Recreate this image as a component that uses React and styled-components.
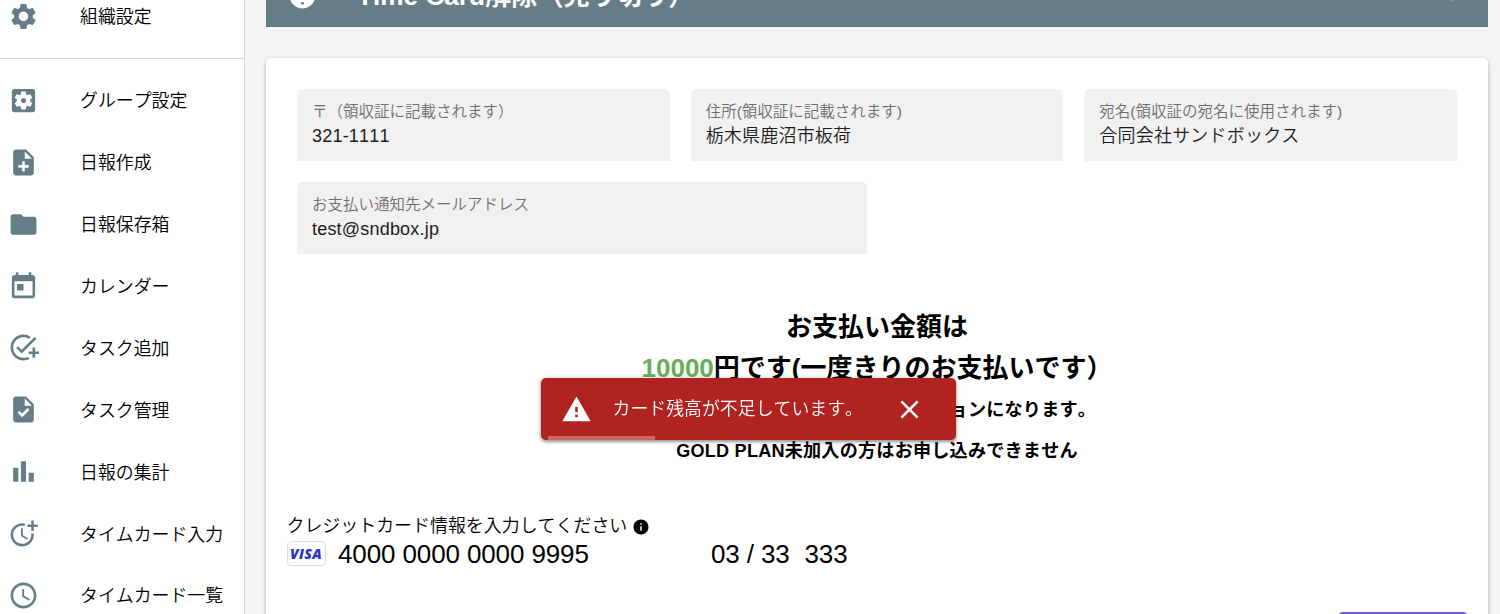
import React from "react";
import styled, { createGlobalStyle } from "styled-components";
import {
  MdSettings, MdSettingsApplications, MdNoteAdd, MdFolder, MdToday, MdAddTask, MdTask,
  MdBarChart, MdMoreTime, MdSchedule, MdHelp, MdExpandMore, MdWarning, MdClose, MdInfo,
} from "react-icons/md";

const Global = createGlobalStyle`
  * { box-sizing: border-box; }
  body {
    margin: 0;
    background: #f5f5f5;
    overflow: hidden;
    font-family: "Liberation Sans", "Noto Sans CJK JP", sans-serif;
    font-kerning: none;
    color: #000;
  }
`;

const Page = styled.div`
  display: flex;
  height: 614px;
  overflow: hidden;
`;

const Sidebar = styled.nav`
  flex: none;
  width: 245px;
  height: 614px;
  overflow: hidden;
  background: #fff;
  border-right: 1px solid #dcdcdc;
`;

const NavGroup = styled.div`
  display: flex;
  flex-direction: column;
  justify-content: flex-end;
  height: ${(p) => p.$height || "auto"};
  padding: ${(p) => p.$pad};
  border-bottom: ${(p) => (p.$divided ? "1px solid #dadada" : "0")};
`;

const NavItem = styled.a`
  display: flex;
  flex: none;
  align-items: center;
  height: 61.9px;
  padding-left: 7.5px;
  gap: 41.5px;
  font-size: 17.9px;
  font-weight: 350;
  white-space: nowrap;

  svg {
    flex: none;
    width: 31px;
    height: 31px;
    color: #667d88;
  }
`;

const NavText = styled.span`
  padding-bottom: 2px;
`;

const Main = styled.main`
  flex: 1;
  display: flex;
  flex-direction: column;
  gap: 31px;
  padding: 0 12px 0 21px;
`;

const Banner = styled.header`
  display: flex;
  flex: none;
  align-items: center;
  height: 62px;
  margin-top: -35px;
  padding: 0 21px 2px;
  background: #667d88;
  color: #fff;

  svg {
    flex: none;
    width: 31px;
    height: 31px;
  }
`;

const BannerTitle = styled.h1`
  flex: 1;
  margin: 1px 0 0 39px;
  font-size: 26.2px;
  line-height: 40px;
  font-weight: 700;
`;

const Card = styled.section`
  flex: none;
  display: flex;
  flex-direction: column;
  height: 640px;
  padding: 31px 31px 0;
  border-radius: 5px;
  background: #fff;
  box-shadow: 0 1px 5px rgba(0, 0, 0, 0.2), 0 2px 3px rgba(0, 0, 0, 0.12);
`;

const FieldGrid = styled.div`
  display: grid;
  grid-template-columns: repeat(3, 1fr);
  gap: 21px;
`;

const Field = styled.label`
  display: flex;
  flex-direction: column;
  height: 72px;
  width: ${(p) => p.$width || "auto"};
  grid-column: ${(p) => (p.$width ? "1 / -1" : "auto")};
  padding: 12px 15px 0;
  border-radius: 5px 5px 0 0;
  background: #f1f1f1;
`;

const FieldLabel = styled.span`
  font-size: 15.5px;
  line-height: 22px;
  font-weight: 350;
  color: #6f6f6f;
`;

const FieldValue = styled.span`
  font-size: 18px;
  line-height: 26px;
  letter-spacing: 0.2px;
  font-weight: 350;
  color: #1d1d1d;
`;

const Pricing = styled.div`
  margin-top: 53px;
  text-align: center;
  font-weight: 700;
`;

const PriceLine = styled.div`
  font-size: 26px;
  line-height: 41.3px;
`;

const Amount = styled.span`
  color: #67ad5b;
`;

const NoteLine = styled.div`
  font-size: 18.1px;
  letter-spacing: 0.22px;
  line-height: 41px;
`;

const Payment = styled.div`
  margin: 39px 0 0 -10.5px;
`;

const PaymentLabel = styled.div`
  display: flex;
  align-items: center;
  gap: 5px;
  height: 27px;
  font-size: 17.95px;
  font-weight: 350;

  svg {
    width: 18px;
    height: 18px;
    margin-top: 5px;
  }
`;

const CardInput = styled.div`
  display: flex;
  align-items: center;
  height: 30px;
  margin-top: 2px;
  font-size: 26px;
  letter-spacing: -0.12px;
  white-space: pre;
`;

const VisaMark = styled.span`
  display: flex;
  align-items: center;
  justify-content: center;
  width: 39px;
  height: 25px;
  margin: -3px 12.5px 0 0;
  border: 1px solid #dedede;
  border-radius: 4px;
  font: italic 800 14px "Open Sans", sans-serif;
  letter-spacing: 0.3px;
  color: #2b33c9;
`;

const CardNumber = styled.span`
  width: 373px;
`;

const Expiry = styled.span`
  width: 93.5px;
`;

const SubmitButton = styled.button`
  align-self: flex-end;
  flex: none;
  width: 130px;
  height: 46px;
  margin: 42.4px -11px 0 0;
  border: 2px solid #6a5be2;
  border-radius: 5px;
  background: #efeefc;
`;

const Toast = styled.div`
  position: fixed;
  left: 541px;
  top: 378px;
  display: flex;
  align-items: center;
  width: 415px;
  height: 62px;
  padding: 0 31px 0 20px;
  border-radius: 5px;
  overflow: visible;
  background: #b02320;
  box-shadow: 0 1px 5px rgba(0, 0, 0, 0.3), 0 2px 3px rgba(0, 0, 0, 0.25);
  color: #fff;

  svg {
    flex: none;
    width: 31px;
    height: 31px;
  }
`;

const ToastText = styled.span`
  flex: 1;
  margin-left: 20.5px;
  padding-bottom: 4px;
  font-size: 17.9px;
  font-weight: 350;
  white-space: nowrap;
`;

const ToastProgress = styled.span`
  position: absolute;
  left: 7px;
  bottom: 0;
  width: 107px;
  height: 4px;
  background: #cb6664;
`;

const menu = [
  [MdSettingsApplications, "グループ設定"],
  [MdNoteAdd, "日報作成"],
  [MdFolder, "日報保存箱"],
  [MdToday, "カレンダー"],
  [MdAddTask, "タスク追加"],
  [MdTask, "タスク管理"],
  [MdBarChart, "日報の集計"],
  [MdMoreTime, "タイムカード入力"],
  [MdSchedule, "タイムカード一覧"],
];

export default function App() {
  return (
    <>
      <Global />
      <Page>
        <Sidebar>
          <NavGroup $height="59px" $pad="0 0 11px" $divided>
            <NavItem><MdSettings /><NavText>組織設定</NavText></NavItem>
          </NavGroup>
          <NavGroup $pad="10.4px 0 0">
            {menu.map(([Icon, text]) => (
              <NavItem key={text}><Icon /><NavText>{text}</NavText></NavItem>
            ))}
          </NavGroup>
        </Sidebar>
        <Main>
          <Banner>
            <MdHelp />
            <BannerTitle>Time Card解除（売り切り）</BannerTitle>
            <MdExpandMore />
          </Banner>
          <Card>
            <FieldGrid>
              <Field>
                <FieldLabel>〒（領収証に記載されます）</FieldLabel>
                <FieldValue>321-1111</FieldValue>
              </Field>
              <Field>
                <FieldLabel>住所(領収証に記載されます)</FieldLabel>
                <FieldValue>栃木県鹿沼市板荷</FieldValue>
              </Field>
              <Field>
                <FieldLabel>宛名(領収証の宛名に使用されます)</FieldLabel>
                <FieldValue>合同会社サンドボックス</FieldValue>
              </Field>
              <Field $width="570px">
                <FieldLabel>お支払い通知先メールアドレス</FieldLabel>
                <FieldValue>test@sndbox.jp</FieldValue>
              </Field>
            </FieldGrid>
            <Pricing>
              <PriceLine>お支払い金額は</PriceLine>
              <PriceLine><Amount>10000</Amount>円です(一度きりのお支払いです）</PriceLine>
              <NoteLine>GOLD PLAN専用の売り切りオプションになります。</NoteLine>
              <NoteLine>GOLD PLAN未加入の方はお申し込みできません</NoteLine>
            </Pricing>
            <Payment>
              <PaymentLabel>クレジットカード情報を入力してください<MdInfo /></PaymentLabel>
              <CardInput>
                <VisaMark>VISA</VisaMark>
                <CardNumber>4000 0000 0000 9995</CardNumber>
                <Expiry>03 / 33</Expiry>
                <span>333</span>
              </CardInput>
            </Payment>
            <SubmitButton aria-label="submit" />
          </Card>
        </Main>
        <Toast>
          <MdWarning />
          <ToastText>カード残高が不足しています。</ToastText>
          <MdClose />
          <ToastProgress />
        </Toast>
      </Page>
    </>
  );
}
